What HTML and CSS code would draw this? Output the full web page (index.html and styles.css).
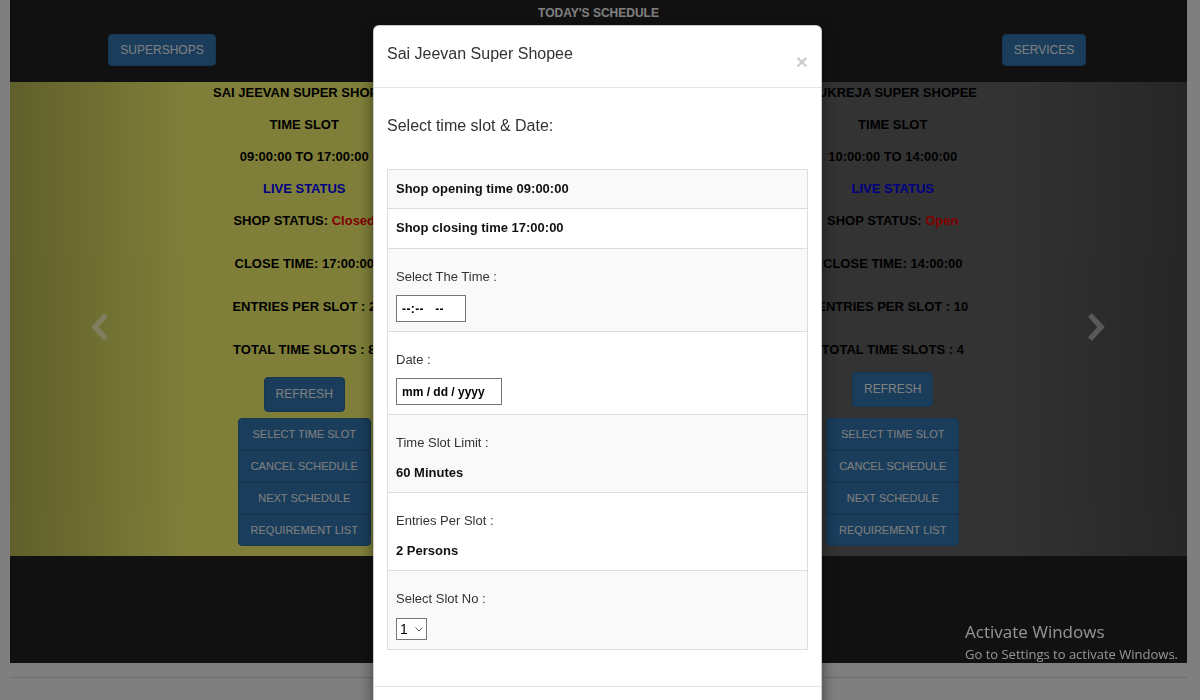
FILE: index.html
```html
<!DOCTYPE html>
<html lang="en">
<head>
<meta charset="utf-8">
<title>Today's Schedule</title>
<link rel="stylesheet" href="styles.css">
</head>
<body class="modal-open">
<div class="page">
  <main class="schedule">
    <header class="top-bar">
      <h1 class="top-title">TODAY'S SCHEDULE</h1>
      <nav class="top-nav">
        <div class="nav-cell"><a class="btn" href="#">SUPERSHOPS</a></div>
        <div class="nav-cell"></div>
        <div class="nav-cell"></div>
        <div class="nav-cell"><a class="btn" href="#">SERVICES</a></div>
      </nav>
    </header>

    <section class="carousel">
      <div class="slides">
        <article class="shop shop--yellow">
          <p class="shop-line">SAI JEEVAN SUPER SHOPEE</p>
          <p class="shop-line">TIME SLOT</p>
          <p class="shop-line">09:00:00 TO 17:00:00</p>
          <p class="shop-line live">LIVE STATUS</p>
          <p class="shop-line">SHOP STATUS: <span class="status">Closed</span></p>
          <p class="shop-line shop-line--gap">CLOSE TIME: 17:00:00</p>
          <p class="shop-line shop-line--gap">ENTRIES PER SLOT : 2</p>
          <p class="shop-line shop-line--gap">TOTAL TIME SLOTS : 8</p>
          <div class="refresh-area"><button class="btn btn-refresh" type="button">REFRESH</button></div>
          <div class="btn-stack">
            <button class="btn" type="button">SELECT TIME SLOT</button>
            <button class="btn" type="button">CANCEL SCHEDULE</button>
            <button class="btn" type="button">NEXT SCHEDULE</button>
            <button class="btn" type="button">REQUIREMENT LIST</button>
          </div>
        </article>
        <article class="shop shop--gray">
          <p class="shop-line">KUKREJA SUPER SHOPEE</p>
          <p class="shop-line">TIME SLOT</p>
          <p class="shop-line">10:00:00 TO 14:00:00</p>
          <p class="shop-line live">LIVE STATUS</p>
          <p class="shop-line">SHOP STATUS: <span class="status">Open</span></p>
          <p class="shop-line shop-line--gap">CLOSE TIME: 14:00:00</p>
          <p class="shop-line shop-line--gap">ENTRIES PER SLOT : 10</p>
          <p class="shop-line shop-line--gap">TOTAL TIME SLOTS : 4</p>
          <div class="refresh-area"><button class="btn btn-refresh" type="button">REFRESH</button></div>
          <div class="btn-stack">
            <button class="btn" type="button">SELECT TIME SLOT</button>
            <button class="btn" type="button">CANCEL SCHEDULE</button>
            <button class="btn" type="button">NEXT SCHEDULE</button>
            <button class="btn" type="button">REQUIREMENT LIST</button>
          </div>
        </article>
      </div>
      <a class="carousel-control left" href="#" aria-label="Previous">
        <svg class="chevron" viewBox="0 0 18 30"><polyline points="15,3 4,15 15,27" fill="none" stroke="#fff" stroke-width="5.5"/></svg>
      </a>
      <a class="carousel-control right" href="#" aria-label="Next">
        <svg class="chevron" viewBox="0 0 18 30"><polyline points="3,3 14,15 3,27" fill="none" stroke="#fff" stroke-width="5.5"/></svg>
      </a>
    </section>
  </main>
  <footer class="page-footer"></footer>
</div>

<div class="modal-backdrop"></div>

<div class="modal">
  <div class="modal-dialog">
    <div class="modal-content">
      <div class="modal-header">
        <h4 class="modal-title">Sai Jeevan Super Shopee</h4>
        <button class="close" type="button" aria-label="Close">&times;</button>
      </div>
      <div class="modal-body">
        <h4 class="slot-heading">Select time slot &amp; Date:</h4>
        <table class="slot-table">
          <tbody>
            <tr><td class="info"><strong>Shop opening time 09:00:00</strong></td></tr>
            <tr><td class="info"><strong>Shop closing time 17:00:00</strong></td></tr>
            <tr><td class="field">
              <label class="field-label" for="slot-time">Select The Time :</label>
              <input id="slot-time" class="field-input field-input--time" type="text" placeholder="--:--   --">
            </td></tr>
            <tr><td class="field">
              <label class="field-label" for="slot-date">Date :</label>
              <input id="slot-date" class="field-input field-input--date" type="text" placeholder="mm / dd / yyyy">
            </td></tr>
            <tr><td class="field">
              <span class="field-label">Time Slot Limit :</span>
              <strong class="field-value">60 Minutes</strong>
            </td></tr>
            <tr><td class="field">
              <span class="field-label">Entries Per Slot :</span>
              <strong class="field-value">2 Persons</strong>
            </td></tr>
            <tr><td class="field">
              <label class="field-label" for="slot-no">Select Slot No :</label>
              <span class="select-wrap">
                <select id="slot-no" class="slot-select"><option>1</option><option>2</option><option>3</option></select>
                <svg class="select-caret" viewBox="0 0 8 5"><polyline points="0.5,0.5 4,4 7.5,0.5" fill="none" stroke="#555" stroke-width="1"/></svg>
              </span>
            </td></tr>
          </tbody>
        </table>
      </div>
      <div class="modal-footer"></div>
    </div>
  </div>
</div>

<div class="activate">
  <div class="activate-title">Activate Windows</div>
  <div class="activate-sub">Go to Settings to activate Windows.</div>
</div>
</body>
</html>
```

FILE: styles.css
```css
* { box-sizing: border-box; }

html, body {
  margin: 0;
  height: 100%;
}

body {
  background: #fff;
  font-family: "Liberation Sans", Arial, sans-serif;
  color: #333;
  overflow: hidden;
}

.page {
  padding: 0 13px 0 10px;
}

.schedule {
  background: #222;
  padding-bottom: 107px;
}

/* top bar */
.top-bar {
  padding: 4px 0 16px;
}

.top-title {
  margin: 0;
  text-align: center;
  font-size: 12px;
  line-height: 18px;
  font-weight: bold;
  color: #fff;
}

.top-nav {
  display: grid;
  grid-template-columns: repeat(4, 294px);
  padding-left: 5px;
  margin-top: 12px;
}

.nav-cell {
  display: flex;
  justify-content: center;
}

.btn {
  display: inline-block;
  font-family: inherit;
  font-size: 12px;
  line-height: 18px;
  padding: 6px 11px;
  color: #fff;
  background: #337ab7;
  border: 1px solid #2e6da4;
  border-radius: 4px;
  text-decoration: none;
  cursor: pointer;
  white-space: nowrap;
}

/* carousel */
.carousel {
  position: relative;
  height: 474px;
}

.slides {
  display: grid;
  grid-template-columns: 1fr 1fr;
  height: 100%;
}

.shop {
  display: flex;
  flex-direction: column;
  align-items: center;
}

.shop--yellow { background: #ffff74; }
.shop--gray { background: #666; }

.shop-line {
  margin: 0;
  font-size: 13px;
  line-height: 22px;
  font-weight: bold;
  color: #000;
  white-space: nowrap;
}

.shop-line + .shop-line { margin-top: 10px; }
.shop-line.shop-line--gap { margin-top: 21px; }

.live { color: #0000ff; }
.status { color: #ff0000; }

.refresh-area {
  height: 57px;
  display: flex;
  align-items: center;
}

.btn-refresh {
  font-size: 12px;
  line-height: 21px;
  padding: 6px 11px;
}

.shop--yellow .btn-refresh { margin-top: 10px; }

.btn-stack {
  display: flex;
  flex-direction: column;
}

.btn-stack .btn {
  font-size: 11px;
  line-height: 20px;
  padding: 5px 12px;
  border-radius: 0;
  text-align: center;
}

.btn-stack .btn:first-child { border-radius: 4px 4px 0 0; }
.btn-stack .btn:last-child { border-radius: 0 0 4px 4px; }

.carousel-control {
  position: absolute;
  top: 0;
  bottom: 0;
  width: 15%;
  opacity: .5;
}

.carousel-control.left {
  left: 0;
  background: linear-gradient(to right, rgba(0,0,0,.5), rgba(0,0,0,0));
}

.carousel-control.right {
  right: 0;
  background: linear-gradient(to left, rgba(0,0,0,.5), rgba(0,0,0,0));
}

.chevron {
  position: absolute;
  top: 50%;
  left: 50%;
  width: 18px;
  height: 30px;
  margin-top: -7px;
}

.left .chevron { margin-left: -7px; }
.right .chevron { margin-left: -12px; }

.page-footer {
  margin-top: 14px;
  border-top: 1px solid #ddd;
  height: 40px;
}

/* modal */
.modal-backdrop {
  position: fixed;
  top: 0;
  right: 0;
  bottom: 0;
  left: 0;
  background: #000;
  opacity: .5;
  z-index: 1040;
}

.modal {
  position: fixed;
  top: 0;
  right: 0;
  bottom: 0;
  left: 0;
  overflow: hidden;
  z-index: 1050;
}

.modal-dialog {
  width: 449px;
  margin: 25px 0 0 373px;
}

.modal-content {
  background: #fff;
  border: 1px solid rgba(0,0,0,.2);
  border-radius: 6px;
  box-shadow: 0 5px 15px rgba(0,0,0,.5);
}

.modal-header {
  display: flex;
  justify-content: space-between;
  align-items: flex-start;
  padding: 16px 13px 14px;
  border-bottom: 1px solid #e5e5e5;
}

.modal-title {
  margin: 0;
  font-size: 16px;
  line-height: 23px;
  font-weight: normal;
  color: #333;
}

.close {
  margin-top: 8px;
  padding: 0;
  border: 0;
  background: none;
  font-family: inherit;
  font-size: 21px;
  line-height: 23px;
  font-weight: bold;
  color: #000;
  opacity: .2;
}

.modal-body {
  padding: 15px 13px;
}

.slot-heading {
  margin: 12px 0 32px;
  font-size: 16px;
  line-height: 22px;
  font-weight: normal;
  color: #333;
}

.slot-table {
  width: 100%;
  border-collapse: collapse;
  border: 1px solid #ddd;
  margin-bottom: 21px;
}

.slot-table td {
  border: 1px solid #ddd;
  padding: 8px 8px 9px;
  font-size: 13px;
  line-height: 22px;
  vertical-align: top;
}

.slot-table tr:first-child td { padding-bottom: 8px; }

.slot-table tr:nth-child(odd) td { background: #f9f9f9; }

.info strong { color: #111; }

.field-label {
  display: block;
  margin-top: 10px;
  line-height: 20px;
  color: #333;
}

.field-value {
  display: block;
  margin-top: 10px;
  line-height: 20px;
  color: #111;
}

.field-input {
  display: block;
  margin-top: 8px;
  height: 27px;
  padding: 0 5px;
  border: 1px solid #767676;
  border-radius: 0;
  background: #fff;
  font-family: "Liberation Sans", Arial, sans-serif;
  font-size: 12px;
  font-weight: bold;
  letter-spacing: .4px;
  color: #000;
}

.field-input::placeholder {
  color: #000;
  opacity: 1;
}

.field-input--time { width: 70px; }
.field-input--date { width: 106px; letter-spacing: 0; }

.select-wrap {
  position: relative;
  display: block;
  width: 31px;
  margin-top: 9px;
}

.slot-select {
  -webkit-appearance: none;
  appearance: none;
  display: block;
  width: 31px;
  height: 22px;
  padding: 0 0 0 3px;
  border: 1px solid #767676;
  border-radius: 0;
  background: #fff;
  font-family: "Liberation Sans", Arial, sans-serif;
  font-size: 14px;
  color: #000;
}

.select-caret {
  position: absolute;
  right: 4px;
  top: 9px;
  width: 8px;
  height: 5px;
  pointer-events: none;
}

.modal-footer {
  height: 66px;
  border-top: 1px solid #e5e5e5;
}

/* OS watermark */
.activate {
  position: fixed;
  left: 965px;
  bottom: 36px;
  z-index: 2000;
  color: rgba(255,255,255,.55);
  font-family: "Open Sans", "Noto Sans", sans-serif;
  pointer-events: none;
}

.activate-title {
  font-size: 17px;
  line-height: 24px;
}

.activate-sub {
  font-size: 13px;
  line-height: 20px;
}
```
